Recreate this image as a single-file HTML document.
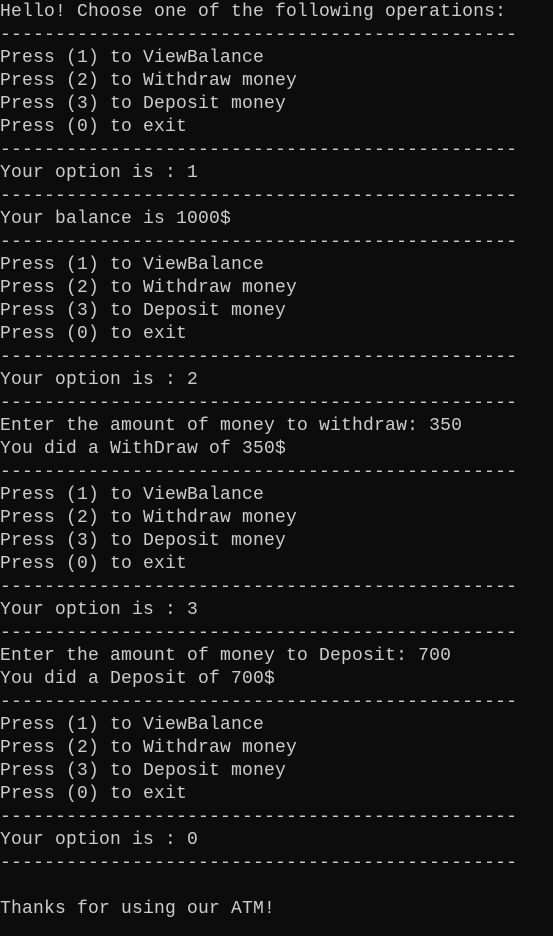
<!DOCTYPE html>
<html><head><meta charset="utf-8"><style>
html,body{margin:0;padding:0;background:#0c0c0c;width:553px;height:936px;overflow:hidden}
pre{margin:0;padding:0;position:relative;top:1px;font-family:"Liberation Mono","DejaVu Sans Mono",monospace;font-size:18px;line-height:23px;color:#cccccc;letter-spacing:0.2px}
</style></head><body><pre>Hello! Choose one of the following operations:
-----------------------------------------------
Press (1) to ViewBalance
Press (2) to Withdraw money
Press (3) to Deposit money
Press (0) to exit
-----------------------------------------------
Your option is : 1
-----------------------------------------------
Your balance is 1000$
-----------------------------------------------
Press (1) to ViewBalance
Press (2) to Withdraw money
Press (3) to Deposit money
Press (0) to exit
-----------------------------------------------
Your option is : 2
-----------------------------------------------
Enter the amount of money to withdraw: 350
You did a WithDraw of 350$
-----------------------------------------------
Press (1) to ViewBalance
Press (2) to Withdraw money
Press (3) to Deposit money
Press (0) to exit
-----------------------------------------------
Your option is : 3
-----------------------------------------------
Enter the amount of money to Deposit: 700
You did a Deposit of 700$
-----------------------------------------------
Press (1) to ViewBalance
Press (2) to Withdraw money
Press (3) to Deposit money
Press (0) to exit
-----------------------------------------------
Your option is : 0
-----------------------------------------------

Thanks for using our ATM!</pre></body></html>
